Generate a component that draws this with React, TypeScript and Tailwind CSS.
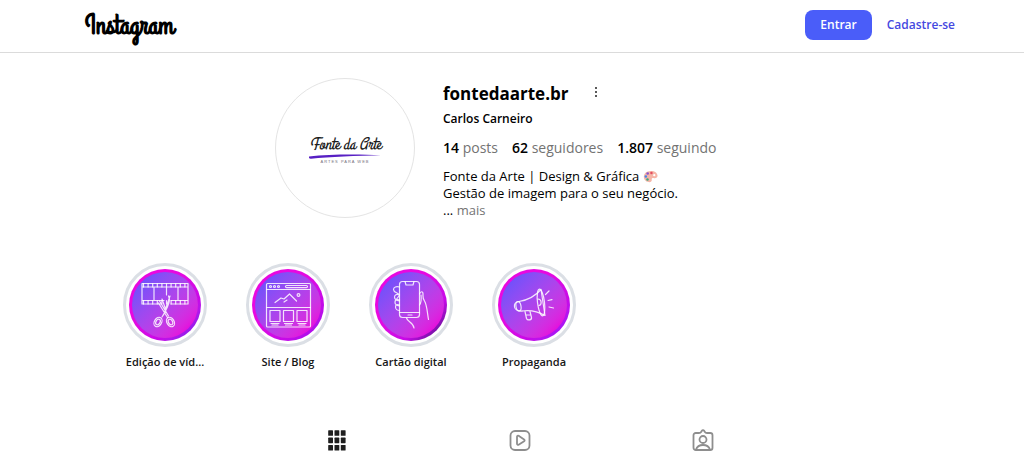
import type { ReactNode } from "react";

type Highlight = { label: string; ring: string; icon: ReactNode };
type Stat = { value: string; label: string };

const line = {
  fill: "none",
  stroke: "#fff",
  strokeOpacity: 0.85,
  strokeWidth: 1.2,
  strokeLinecap: "round",
  strokeLinejoin: "round",
} as const;

function FilmIcon() {
  const holes = Array.from({ length: 10 }, (_, i) => 14.5 + i * 4.6);
  return (
    <svg viewBox="3 3 66 66" className="size-full" aria-hidden="true" {...line}>
      <path d="M13 14.500h46v20.500H42M32 35H13V14.500M13 18h46M13 31.500h22M42 31.500h17M25 18v13.500M37.500 18v8M49 18v13.500" />
      {holes.map((x) => (
        <path key={x} d={`M${x} 14.500v3.500M${x} 31.500v3.500`} />
      ))}
      <path d="M39.500 27c2.500 4-.500 10-3 15l-3.500 6M41 27l-6.500 19M30.500 32l9 15M29.500 34l9 14.500M33 30l3.500 10" />
      <ellipse cx="29" cy="53" rx="3.600" ry="5" transform="rotate(32 29 53)" />
      <ellipse cx="29" cy="53" rx="2" ry="3" transform="rotate(32 29 53)" />
      <ellipse cx="41.500" cy="53" rx="3.600" ry="5" transform="rotate(-32 41.500 53)" />
      <ellipse cx="41.500" cy="53" rx="2" ry="3" transform="rotate(-32 41.500 53)" />
    </svg>
  );
}

function SiteIcon() {
  return (
    <svg viewBox="3 3 66 66" className="size-full" aria-hidden="true" {...line}>
      <rect x="14.500" y="14.500" width="44" height="43.500" rx="1" />
      <path d="M14.500 20.500h44M14.500 38.500h44" />
      <circle cx="18.500" cy="17.500" r="1" />
      <circle cx="22.500" cy="17.500" r="1" />
      <circle cx="26.500" cy="17.500" r="1" />
      <rect x="33.500" y="16.500" width="22" height="2.200" rx="1.100" />
      <path d="M23 33.500l6-4.500 3 1 5.500-5 7 7M32 33l3-2" />
      <circle cx="46.500" cy="26" r="1.400" />
      {[18, 31.5, 45].map((x) => (
        <g key={x}>
          <rect x={x} y="41.500" width="10" height="11" />
          <path d={`M${x + 1} 54.500h8M${x + 2} 56h6`} />
        </g>
      ))}
    </svg>
  );
}

function PhoneIcon() {
  return (
    <svg viewBox="3 3 66 66" className="size-full" aria-hidden="true" {...line}>
      <rect x="24.500" y="12.500" width="20" height="36" rx="3" />
      <path d="M30 12.500l1 3.500h7l1-3.500M24.500 43.500h20M33 46h4" />
      <path d="M24.500 18c-3-1-6 0-6 2.500s3 3 5 4.500M24.500 26c-3-1.500-5 0-5 2s2 3.500 5 4M24.500 31c-3-1-4.500 0-4.500 2.500s2 3 4.500 3.500M24.500 36c-2.500-1-4 0-4 2s2 3.500 4 3.500M24 27l-4 5" />
      <path d="M44.500 25c1-3 3.500-3 3.500 0 0 3-.500 4 1.500 7 2.500 4 2.500 10 4 18.500M44.500 36c1.500-2 2-6 1.500-10M31.500 49c1 4 7 4.500 7.500 10" />
    </svg>
  );
}

function MegaphoneIcon() {
  return (
    <svg viewBox="3 3 66 66" className="size-full" aria-hidden="true" {...line}>
      <path d="M21 32.500c9-1.500 16-5 22-12l4 26c-7-4-14-6-23-4.500" />
      <path d="M21 32.500c-3 .500-5 2.500-4.500 5.500s4 4.500 7.500 4" />
      <ellipse cx="20.500" cy="37.300" rx="2.500" ry="4.700" transform="rotate(-10 20.500 37.300)" />
      <ellipse cx="43" cy="33.500" rx="3.500" ry="13.500" transform="rotate(-7 43 33.500)" />
      <path d="M40 30c4 0 4 6 1 6.500M27 42.500l1.500 7c1 2.500 5.500 1.500 5-1l-1.500-6M28 46h4" />
      <path d="M47.500 25.500l3.500-3.500M50 31.500l4-.800M51 38l4.500 1" />
    </svg>
  );
}

const highlights: Highlight[] = [
  { label: "Edição de víd...", ring: "to-[#6a08ee]", icon: <FilmIcon /> },
  { label: "Site / Blog", ring: "to-[#9a08ee]", icon: <SiteIcon /> },
  { label: "Cartão digital", ring: "to-[#3a0873]", icon: <PhoneIcon /> },
  { label: "Propaganda", ring: "to-[#8a08ff]", icon: <MegaphoneIcon /> },
];

const stats: Stat[] = [
  { value: "14", label: "posts" },
  { value: "62", label: "seguidores" },
  { value: "1.807", label: "seguindo" },
];

function PaletteIcon() {
  return (
    <svg viewBox="0 0 16 16" className="inline-block size-[15px] align-[-3px]" role="img" aria-label="🎨">
      <path d="M8.500 2C3.500 2 .800 5 .900 8.500 1 12 4 14 7 14c2.500 0 2.500-1.700 2.300-2.700-.200-1.300 1-1.800 2.500-1.500 2 .400 3.700-.500 3.700-2.500C15.500 4 12.500 2 8.500 2z" fill="#f5b5a7" />
      <circle cx="5" cy="4.800" r="1.400" fill="#8d56c9" />
      <circle cx="3" cy="8" r="1.300" fill="#4687e8" />
      <circle cx="4.800" cy="11.200" r="1.300" fill="#39a980" />
      <circle cx="9" cy="4.200" r="1.300" fill="#e34b5f" />
      <circle cx="12" cy="6.600" r="1.200" fill="#fff" />
    </svg>
  );
}

export default function App() {
  return (
    <div className="bg-white font-['Segoe_UI','Open_Sans','Noto_Sans',sans-serif] text-black">
      <header className="border-b border-[#dbdbdb] pl-4">
        <div className="mx-auto flex h-[52px] max-w-[870px] items-center justify-between">
          <a href="#" className="font-['Grand_Hotel',cursive] text-[28px] leading-8 font-bold">
            Instagram
          </a>
          <nav className="flex items-center gap-[15px] pb-[2px] text-[12px] font-semibold">
            <button type="button" className="h-[30px] rounded-lg bg-[#4a5df9] px-[15px] text-white">
              Entrar
            </button>
            <a href="#" className="text-[#4549e0]">
              Cadastre-se
            </a>
          </nav>
        </div>
      </header>

      <main className="pl-4">
        <section className="mx-auto flex max-w-[490px] gap-7 pt-[25px]">
          <div className="flex size-[140px] shrink-0 items-center justify-center rounded-full border border-[#e4e4e4]">
            <div className="flex flex-col items-center pt-1 text-[#1c1c1c]">
              <span className="font-['Grand_Hotel',cursive] text-[17px] leading-[18px] whitespace-nowrap italic">
                Fonte da Arte
              </span>
              <svg viewBox="0 0 72 5" className="h-[5px] w-[72px]" aria-hidden="true">
                <path d="M0 2.500C20 .200 48 0 72 1.200 48 1.800 20 2.600 2 4.800 0 5-1 3 0 2.500z" fill="#5820c4" />
              </svg>
              <span className="font-['Liberation_Sans',sans-serif] text-[4px] leading-[5px] tracking-[1px] text-[#77727d]">
                ARTES PARA WEB
              </span>
            </div>
          </div>

          <div className="min-w-0 flex-1">
            <div className="flex h-8 items-center gap-5">
              <h1 className="text-[17px] leading-6 font-bold">fontedaarte.br</h1>
              <button type="button" aria-label="Opções" className="flex size-4 items-center justify-center pb-1">
                <svg viewBox="0 0 4 12" className="h-3 w-1" fill="#222" aria-hidden="true">
                  <circle cx="2" cy="2" r="1" />
                  <circle cx="2" cy="6" r="1" />
                  <circle cx="2" cy="10" r="1" />
                </svg>
              </button>
            </div>
            <p className="text-[12px] leading-[18px] font-semibold">Carlos Carneiro</p>
            <ul className="mt-[10px] flex gap-[14px] text-[14px] leading-5 text-[#737373]">
              {stats.map((s) => (
                <li key={s.label}>
                  <strong className="font-semibold text-black">{s.value}</strong> {s.label}
                </li>
              ))}
            </ul>
            <p className="mt-[10px] text-[13px] leading-[17px]">
              Fonte da Arte | Design &amp; Gráfica <PaletteIcon />
              <br />
              Gestão de imagem para o seu negócio.
              <br />
              ...{" "}
              <button type="button" className="text-[#737373]">
                mais
              </button>
            </p>
          </div>
        </section>

        <section className="mx-auto max-w-[794px] pt-[44px]">
          <ul className="flex gap-[39px]">
            {highlights.map((h) => (
              <li key={h.label}>
                <button type="button" className="flex w-[84px] flex-col items-center">
                  <span className="flex size-[84px] items-center justify-center rounded-full border-3 border-[#dbdfe5]">
                    <span
                      className={`size-[72px] rounded-full bg-linear-to-br from-[#e808e0] from-35% via-[#c808e8] via-70% p-[3px] ${h.ring}`}
                    >
                      <span className="block size-full rounded-full bg-linear-to-br from-[#7350fa] from-15% to-[#e410dc] to-85%">
                        {h.icon}
                      </span>
                    </span>
                  </span>
                  <span className="pt-[7px] text-[11px] leading-4 font-semibold whitespace-nowrap text-[#161616]">
                    {h.label}
                  </span>
                </button>
              </li>
            ))}
          </ul>
        </section>

        <nav className="mx-auto mt-[58px] grid max-w-[549px] grid-cols-3 text-[#8e8e8e]" aria-label="Publicações">
          <a href="#" aria-label="Posts" className="flex justify-center text-[#1f1f1f]">
            <svg viewBox="0 0 24 24" className="size-6" fill="currentColor" aria-hidden="true">
              {[2.2, 9.6, 17].map((y) =>
                [3.2, 9.5, 15.8].map((x) => (
                  <rect key={`${x}-${y}`} x={x} y={y} width="4.800" height="5.600" rx="0.600" />
                )),
              )}
            </svg>
          </a>
          <a href="#" aria-label="Reels" className="flex justify-center">
            <svg viewBox="0 0 24 24" className="size-6" fill="none" stroke="currentColor" strokeWidth="1.800" strokeLinejoin="round" aria-hidden="true">
              <rect x="2.500" y="3" width="19" height="19" rx="4.500" />
              <path d="M9 8.800c0-.900.900-1.400 1.600-1l5.500 3.600c.700.500.700 1.300 0 1.800l-5.500 3.600c-.700.400-1.600 0-1.600-1z" />
            </svg>
          </a>
          <a href="#" aria-label="Marcados" className="flex justify-center">
            <svg viewBox="0 0 24 24" className="size-6" fill="none" stroke="currentColor" strokeWidth="1.800" strokeLinejoin="round" strokeLinecap="round" aria-hidden="true">
              <path d="M4.800 5H8c1.100 0 1.800-.500 2.300-1.300l.600-1c.500-.800 1.700-.800 2.200 0l.600 1C14.200 4.500 14.900 5 16 5h3.200c1.300 0 2.300 1 2.300 2.300v12.400c0 1.300-1 2.300-2.300 2.300H4.800c-1.300 0-2.300-1-2.300-2.300V7.300C2.500 6 3.500 5 4.800 5z" />
              <circle cx="12" cy="11.500" r="3.500" />
              <path d="M5 21.500c1-3 3.500-4.500 7-4.500s6 1.500 7 4.500" />
            </svg>
          </a>
        </nav>
      </main>
    </div>
  );
}
